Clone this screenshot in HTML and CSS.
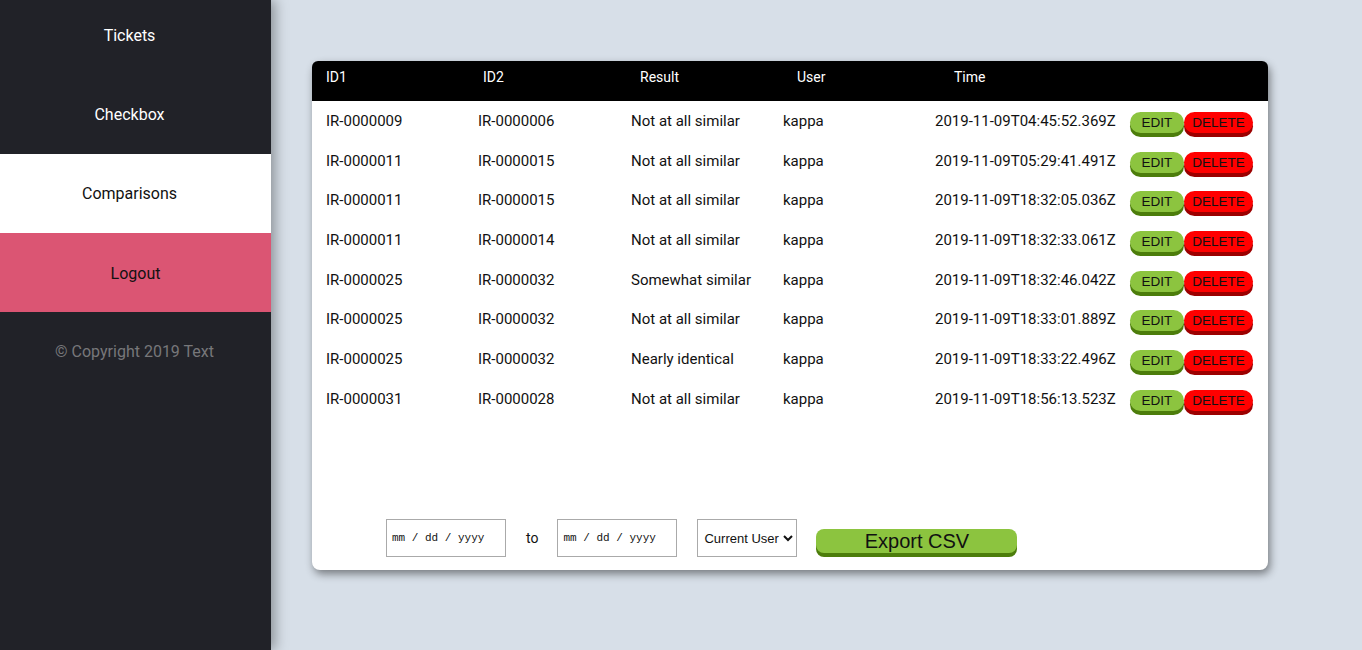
FILE: index.html
```html
<!DOCTYPE html>
<html>
<head>
<meta charset="utf-8">
<link rel="stylesheet" href="styles.css">
</head>
<body>
<div class="app">
  <aside class="sidebar">
    <nav class="nav">
      <a class="nav-item">Tickets</a>
      <a class="nav-item">Checkbox</a>
      <a class="nav-item active">Comparisons</a>
      <a class="nav-item logout">Logout</a>
    </nav>
    <div class="copyright">© Copyright 2019 Text</div>
  </aside>
  <main class="main">
    <section class="card">
      <div class="thead">
        <span>ID1</span><span>ID2</span><span>Result</span><span>User</span><span>Time</span>
      </div>
      <div class="tbody">
        <div class="row"><span>IR-0000009</span><span>IR-0000006</span><span>Not at all similar</span><span>kappa</span><span>2019-11-09T04:45:52.369Z</span><span class="actions"><button class="btn edit">EDIT</button><button class="btn delete">DELETE</button></span></div>
        <div class="row"><span>IR-0000011</span><span>IR-0000015</span><span>Not at all similar</span><span>kappa</span><span>2019-11-09T05:29:41.491Z</span><span class="actions"><button class="btn edit">EDIT</button><button class="btn delete">DELETE</button></span></div>
        <div class="row"><span>IR-0000011</span><span>IR-0000015</span><span>Not at all similar</span><span>kappa</span><span>2019-11-09T18:32:05.036Z</span><span class="actions"><button class="btn edit">EDIT</button><button class="btn delete">DELETE</button></span></div>
        <div class="row"><span>IR-0000011</span><span>IR-0000014</span><span>Not at all similar</span><span>kappa</span><span>2019-11-09T18:32:33.061Z</span><span class="actions"><button class="btn edit">EDIT</button><button class="btn delete">DELETE</button></span></div>
        <div class="row"><span>IR-0000025</span><span>IR-0000032</span><span>Somewhat similar</span><span>kappa</span><span>2019-11-09T18:32:46.042Z</span><span class="actions"><button class="btn edit">EDIT</button><button class="btn delete">DELETE</button></span></div>
        <div class="row"><span>IR-0000025</span><span>IR-0000032</span><span>Not at all similar</span><span>kappa</span><span>2019-11-09T18:33:01.889Z</span><span class="actions"><button class="btn edit">EDIT</button><button class="btn delete">DELETE</button></span></div>
        <div class="row"><span>IR-0000025</span><span>IR-0000032</span><span>Nearly identical</span><span>kappa</span><span>2019-11-09T18:33:22.496Z</span><span class="actions"><button class="btn edit">EDIT</button><button class="btn delete">DELETE</button></span></div>
        <div class="row"><span>IR-0000031</span><span>IR-0000028</span><span>Not at all similar</span><span>kappa</span><span>2019-11-09T18:56:13.523Z</span><span class="actions"><button class="btn edit">EDIT</button><button class="btn delete">DELETE</button></span></div>
      </div>
      <div class="filters">
        <div class="date-box">mm / dd / yyyy</div>
        <span class="to">to</span>
        <div class="date-box">mm / dd / yyyy</div>
        <select class="user-select"><option>Current User</option></select>
        <button class="export">Export CSV</button>
      </div>
    </section>
  </main>
</div>
</body>
</html>
```

FILE: styles.css
```css
html, body {
  margin: 0;
  padding: 0;
  height: 100%;
}
body {
  font-family: Roboto, "Liberation Sans", sans-serif;
  background: #d7dfe8;
}
.app {
  display: flex;
  height: 650px;
  overflow: hidden;
}
.sidebar {
  width: 271px;
  flex: 0 0 271px;
  background: #212228;
  box-shadow: 4px 0 12px rgba(0, 0, 0, 0.35);
  position: relative;
  z-index: 1;
  display: flex;
  flex-direction: column;
}
.nav {
  display: flex;
  flex-direction: column;
  margin-top: -4px;
}
.nav-item {
  height: 79px;
  display: flex;
  align-items: center;
  justify-content: center;
  padding-right: 12px;
  font-size: 16px;
  color: #ffffff;
}
.nav-item.active {
  background: #ffffff;
  color: #111111;
}
.nav-item.logout {
  background: #db5573;
  color: #111111;
  padding-right: 0;
  padding-top: 1px;
  box-sizing: border-box;
}
.copyright {
  height: 79px;
  display: flex;
  align-items: center;
  justify-content: center;
  font-size: 16px;
  color: #77777a;
  padding-right: 2px;
}
.main {
  flex: 1;
  padding: 61px 0 0 41px;
}
.card {
  width: 956px;
  height: 509px;
  background: #ffffff;
  border-radius: 8px;
  box-shadow: 2px 4px 8px rgba(0, 0, 0, 0.45);
  display: flex;
  flex-direction: column;
}
.thead {
  height: 40px;
  box-sizing: border-box;
  background: #000000;
  border-radius: 6px 6px 0 0;
  color: #ffffff;
  font-size: 14px;
  display: grid;
  grid-template-columns: 157px 157px 157px 157px 157px;
  padding: 8px 0 0 14px;
}
.tbody {
  display: flex;
  flex-direction: column;
}
.row {
  height: 39.72px;
  display: grid;
  grid-template-columns: 152px 153px 152px 152px 195px auto;
  align-items: center;
  padding-left: 14px;
  font-size: 15px;
  color: #111111;
}
.actions {
  display: flex;
  padding-top: 3px;
}
.btn {
  height: 21px;
  border: none;
  border-radius: 11px;
  font-family: "Liberation Sans", Arial, sans-serif;
  font-size: 13.5px;
  color: #111111;
  padding: 0;
  line-height: 21px;
}
.btn.edit {
  width: 54px;
  background: #8cc43f;
  box-shadow: 0 4px 0 #4c7d0b;
}
.btn.delete {
  width: 69px;
  background: #ff0000;
  box-shadow: 0 4px 0 #9c0000;
}
.filters {
  margin-top: auto;
  display: flex;
  align-items: center;
  gap: 20px;
  padding: 0 0 13px 74px;
}
.date-box {
  width: 120px;
  height: 38px;
  box-sizing: border-box;
  border: 1px solid #aaaaaa;
  display: flex;
  align-items: center;
  padding-left: 5px;
  font-family: "Liberation Mono", "Courier New", monospace;
  font-size: 11px;
  color: #111111;
}
.to {
  font-size: 14px;
  color: #111111;
  margin-right: -1px;
}
.user-select {
  width: 100px;
  height: 38px;
  box-sizing: border-box;
  border: 1px solid #aaaaaa;
  border-radius: 0;
  background: #ffffff;
  font-family: "Liberation Sans", Arial, sans-serif;
  font-size: 13px;
  color: #111111;
  padding-left: 2px;
}
.export {
  width: 201px;
  height: 24px;
  margin-top: 6px;
  margin-left: -1px;
  border: none;
  border-radius: 8px;
  background: #8cc43f;
  box-shadow: 0 4px 0 #4c7d0b;
  font-family: "Liberation Sans", Arial, sans-serif;
  font-size: 20px;
  color: #111111;
  line-height: 24px;
  padding: 0;
}
```
